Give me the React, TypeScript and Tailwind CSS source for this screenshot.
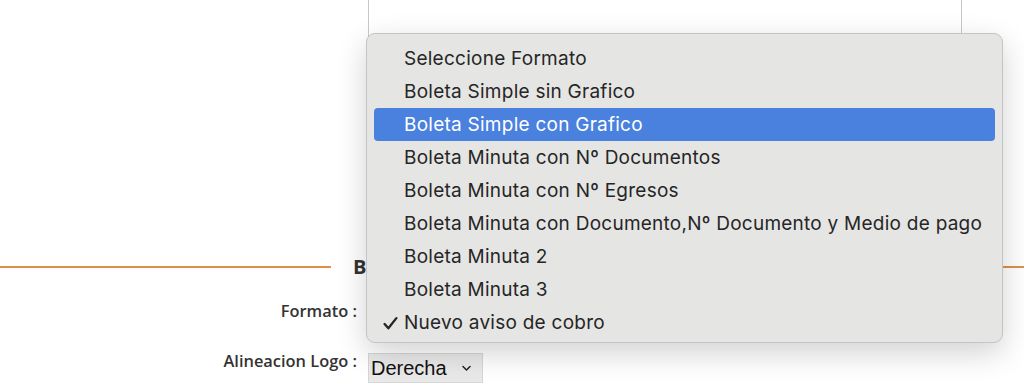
import React from "react";

const items = [
  "Seleccione Formato",
  "Boleta Simple sin Grafico",
  "Boleta Simple con Grafico",
  "Boleta Minuta con Nº Documentos",
  "Boleta Minuta con Nº Egresos",
  "Boleta Minuta con Documento,Nº Documento y Medio de pago",
  "Boleta Minuta 2",
  "Boleta Minuta 3",
  "Nuevo aviso de cobro",
];

export default function App() {
  return (
    <div className="relative w-[1024px] h-[386px] overflow-hidden bg-white" style={{ fontFamily: "'Open Sans', sans-serif" }}>
      {/* textarea box */}
      <div className="ml-[368px] w-[594px] h-[251px] border-x border-[#c8c8c8] bg-white" />

      {/* section heading */}
      <div className="flex items-center h-[32px]">
        <div className="w-[331px] h-[2px] bg-[#df8f49]" />
        <div className="ml-[22px] text-[20px] font-bold text-[#333] leading-none">Boleta</div>
        <div className="flex-1 ml-[24px] h-[2px] bg-[#df8f49]" />
      </div>

      {/* form rows */}
      <div className="flex items-center h-[30px] mt-[13px]">
        <div className="w-[357px] text-right text-[16.4px] font-semibold text-[#333]">Formato :</div>
        <div className="ml-[11px] w-[300px] h-[26px] border border-[#9ab] rounded-[3px] bg-[#eef2f7]" />
      </div>
      <div className="flex items-center h-[30px] mt-[27px]">
        <div className="w-[357px] text-right text-[16.4px] font-semibold text-[#333] -mt-[14px]">Alineacion Logo :</div>
        <div className="ml-[11px] w-[115px] h-[30px] border border-[#d6d6d6] bg-[#e9e9e9] flex items-center pl-[2px] text-[20px] text-[#111]" style={{ fontFamily: "'Liberation Sans', Arial, sans-serif" }}>
          <span>Derecha</span>
          <svg className="ml-[14px]" width="11" height="8" viewBox="0 0 11 8" fill="none">
            <path d="M2 2.5L5.5 6L9 2.5" stroke="#222" strokeWidth="1.5" strokeLinecap="round" strokeLinejoin="round" />
          </svg>
        </div>
      </div>

      {/* dropdown menu */}
      <div
        className="absolute left-[366px] top-[33px] w-[637px] h-[310px] rounded-[9px] border border-[#c4c4c4] bg-[#e5e5e4] pt-[8px] shadow-[0_10px_30px_rgba(0,0,0,0.18)]"
        style={{ fontFamily: "Inter, 'Liberation Sans', sans-serif" }}
      >
        {items.map((t, i) => (
          <div
            key={t}
            className={
              i === 2
                ? "relative mx-[7px] h-[33px] rounded-[4px] bg-[#4a80de] text-white flex items-center pl-[30px] pt-[2px] text-[19px] tracking-[0.25px]"
                : "relative mx-[7px] h-[33px] flex items-center pl-[30px] pt-[2px] text-[19px] tracking-[0.25px] text-[#262626]"
            }
          >
            {i === 8 && (
              <svg className="absolute left-[9px] top-[10px]" width="15" height="15" viewBox="0 0 14 14" fill="none">
                <path d="M1.5 7.5L5 11.5L12.5 2" stroke="#262626" strokeWidth="2.2" strokeLinecap="round" strokeLinejoin="round" />
              </svg>
            )}
            {t}
          </div>
        ))}
      </div>
    </div>
  );
}
